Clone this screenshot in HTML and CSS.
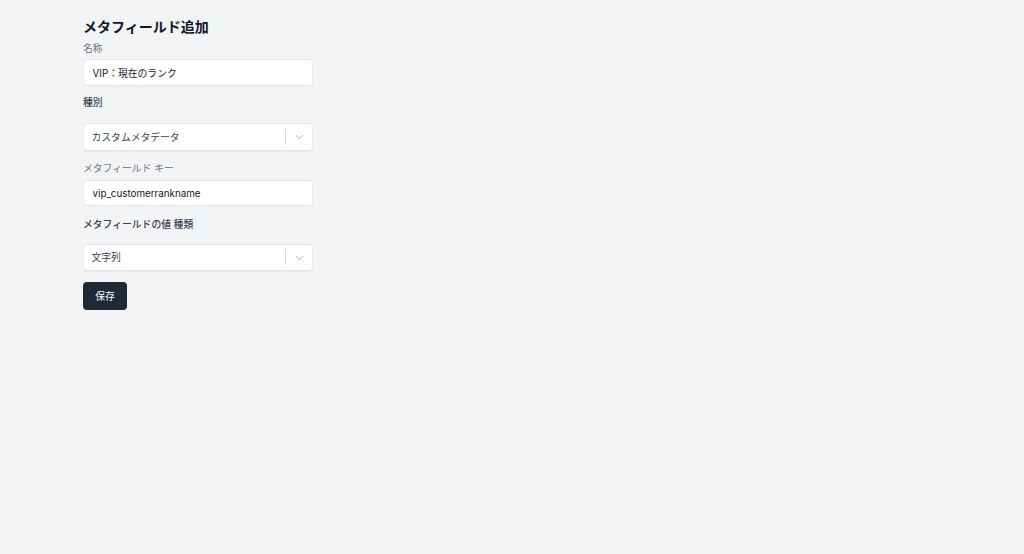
FILE: index.html
```html
<!DOCTYPE html>
<html lang="ja">
<head>
<meta charset="utf-8">
<link rel="stylesheet" href="styles.css">
</head>
<body>
<div class="page">
  <h1 class="title">メタフィールド追加</h1>
  <div class="field f-name">
    <label class="label muted">名称</label>
    <input class="input" type="text" value="VIP：現在のランク">
  </div>
  <div class="field f-kind">
    <label class="label">種別</label>
    <div class="select">
      <span class="select-value">カスタムメタデータ</span>
      <span class="select-sep"></span>
      <span class="select-arrow"><svg width="9" height="6" viewBox="0 0 9 6"><path d="M1 1.2l3.5 3.5 3.5-3.5" fill="none" stroke="#c8c8c8" stroke-width="1.1" stroke-linecap="round" stroke-linejoin="round"/></svg></span>
    </div>
  </div>
  <div class="field f-key">
    <label class="label muted">メタフィールド キー</label>
    <input class="input" type="text" value="vip_customerrankname">
  </div>
  <div class="field f-type">
    <label class="label">メタフィールドの値 種類</label>
    <div class="select">
      <span class="select-value">文字列</span>
      <span class="select-sep"></span>
      <span class="select-arrow"><svg width="9" height="6" viewBox="0 0 9 6"><path d="M1 1.2l3.5 3.5 3.5-3.5" fill="none" stroke="#c8c8c8" stroke-width="1.1" stroke-linecap="round" stroke-linejoin="round"/></svg></span>
    </div>
  </div>
  <button class="btn" type="button">保存</button>
</div>
</body>
</html>
```
FILE: styles.css
```css
html, body {
  margin: 0;
  padding: 0;
  background: #f3f4f6;
  font-family: "Inter", "Noto Sans CJK JP", sans-serif;
  color: #1f2937;
}
.page {
  padding: 16.7px 0 0 83px;
  width: 230px;
  display: flex;
  flex-direction: column;
}
.title {
  margin: 0;
  font-size: 14px;
  line-height: 19.6px;
  font-weight: 700;
  color: #111827;
}
.field {
  display: flex;
  flex-direction: column;
}
.f-name { margin-top: 5.7px; gap: 3.3px; }
.f-kind { margin-top: 10px; gap: 13.3px; }
.f-key { margin-top: 11.5px; gap: 3.8px; }
.f-type { margin-top: 11.5px; gap: 11.8px; }
.label {
  font-size: 9.8px;
  line-height: 14px;
  color: #374151;
  font-weight: 500;
}
.label.muted { color: #6b7280; font-weight: 400; }
.input {
  box-sizing: border-box;
  width: 230px;
  height: 26.6px;
  margin: 0;
  padding: 0 8.5px;
  border: 1px solid #e5e7eb;
  border-radius: 4px;
  background: #fff;
  box-shadow: 0 1px 1px rgba(0, 0, 0, 0.03);
  font-family: inherit;
  font-size: 9.8px;
  color: #111827;
  outline: none;
}
.select {
  box-sizing: border-box;
  width: 230px;
  height: 27.4px;
  display: flex;
  align-items: center;
  border: 1px solid #e5e7eb;
  border-radius: 4px;
  background: #fff;
  box-shadow: 0 1px 1px rgba(0, 0, 0, 0.03);
  padding-left: 7.5px;
}
.select-value {
  flex: 1;
  font-size: 9.8px;
  color: #374151;
}
.select-sep {
  width: 1px;
  height: 16px;
  background: #d9d9d9;
}
.select-arrow {
  width: 26px;
  display: flex;
  justify-content: center;
  align-items: center;
  padding-top: 1px;
}
.btn {
  align-self: flex-start;
  margin-top: 11px;
  height: 27.6px;
  width: 44px;
  border: none;
  border-radius: 4px;
  background: #1f2937;
  color: #fff;
  font-family: inherit;
  font-size: 9.8px;
  padding: 0;
}
```
